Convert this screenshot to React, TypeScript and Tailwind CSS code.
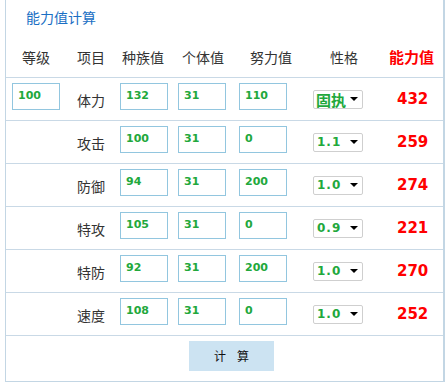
import React from 'react';

const cjk = { fontFamily: '"Noto Sans CJK SC", "Liberation Sans", sans-serif' };
const num = { fontFamily: '"DejaVu Sans", "Liberation Sans", sans-serif' };

type Row = {
  label: string;
  base: string;
  iv: string;
  ev: string;
  nature: string;
  value: string;
};

const rows: Row[] = [
  { label: '体力', base: '132', iv: '31', ev: '110', nature: '固执', value: '432' },
  { label: '攻击', base: '100', iv: '31', ev: '0', nature: '1.1', value: '259' },
  { label: '防御', base: '94', iv: '31', ev: '200', nature: '1.0', value: '274' },
  { label: '特攻', base: '105', iv: '31', ev: '0', nature: '0.9', value: '221' },
  { label: '特防', base: '92', iv: '31', ev: '200', nature: '1.0', value: '270' },
  { label: '速度', base: '108', iv: '31', ev: '0', nature: '1.0', value: '252' },
];

function NumBox({ value }: { value: string }) {
  return (
    <div
      className="-mt-[5px] flex h-[27px] w-[48px] items-center border border-[#92c6df] bg-white pl-[5px] text-[11px] font-bold text-[#22a83c]"
      style={num}
    >
      {value}
    </div>
  );
}

function NatureSelect({ value }: { value: string }) {
  const isText = value === '固执';
  return (
    <div className="flex h-[19px] w-[50px] items-center justify-between rounded-[2px] border border-[#cfcfcf] bg-white pl-[2px] pr-[4px]">
      {isText ? (
        <span className="text-[15px] font-bold leading-none text-[#22a83c]" style={cjk}>
          {value}
        </span>
      ) : (
        <span className="pl-[1px] text-[12px] font-bold leading-none tracking-[1px] text-[#22a83c]" style={num}>
          {value}
        </span>
      )}
      <span className="h-0 w-0 border-x-[4px] border-t-[4px] border-x-transparent border-t-black" />
    </div>
  );
}

export default function App() {
  return (
    <div className="h-[382px] w-[447px] overflow-hidden bg-white pl-[5px]">
      <div className="h-[382px] w-[440px] border-b border-l border-r-2 border-[#c3d6e4]">
        <div className="h-[37px] pl-[20px] pt-[7px] text-[14px] leading-[20px] text-[#1a6fc4]" style={cjk}>
          能力值计算
        </div>

        <div className="flex h-[41px] items-center border-b border-[#c9d9e6] text-[14px] text-[#333]" style={cjk}>
          <div className="w-[64px] pl-[16px]">等级</div>
          <div className="w-[46px] pl-[7px]">项目</div>
          <div className="w-[58px] pl-[6px]">种族值</div>
          <div className="w-[60px] pl-[8px]">个体值</div>
          <div className="w-[71px] pl-[16px]">努力值</div>
          <div className="w-[70px] pl-[25px]">性格</div>
          <div className="w-[68px] pl-[14px] text-[15px] font-bold text-[#ff0000]">能力值</div>
        </div>

        {rows.map((r, i) => (
          <div key={r.label} className="flex h-[43px] items-center border-b border-[#c9d9e6]">
            <div className="w-[64px] pl-[6px]">{i === 0 && <NumBox value="100" />}</div>
            <div className="w-[46px] pl-[7px] pt-[2px] text-[14px] text-[#333]" style={cjk}>
              {r.label}
            </div>
            <div className="w-[58px] pl-[4px]">
              <NumBox value={r.base} />
            </div>
            <div className="w-[60px] pl-[4px]">
              <NumBox value={r.iv} />
            </div>
            <div className="w-[71px] pl-[5px]">
              <NumBox value={r.ev} />
            </div>
            <div className="w-[70px] pl-[8px]">
              <NatureSelect value={r.nature} />
            </div>
            <div className="w-[68px] pl-[22px] text-[15px] font-bold text-[#ff0000]" style={num}>
              {r.value}
            </div>
          </div>
        ))}

        <div className="flex h-[45px] items-start pt-[5px]">
          <button
            className="ml-[183px] flex h-[30px] w-[85px] items-center justify-center gap-[11px] bg-[#cce3f2] text-[12px] text-[#111]"
            style={cjk}
          >
            <span>计</span>
            <span>算</span>
          </button>
        </div>
      </div>
    </div>
  );
}
